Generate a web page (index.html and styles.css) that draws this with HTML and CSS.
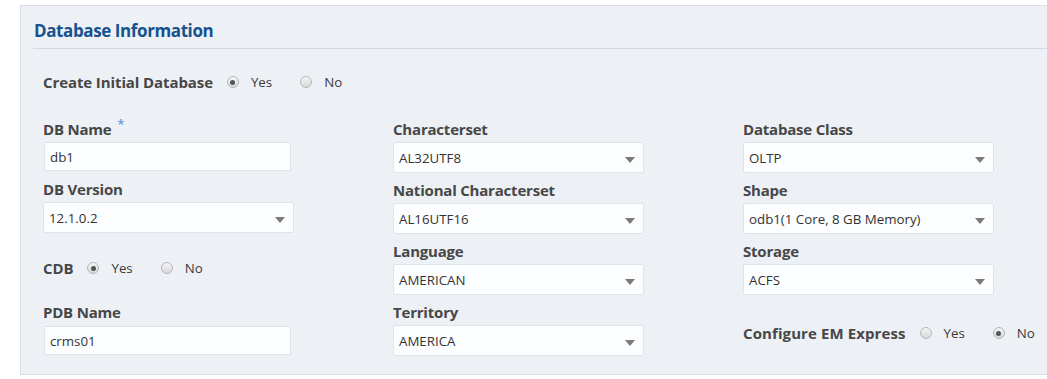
FILE: index.html
```html
<!DOCTYPE html>
<html>
<head>
<meta charset="utf-8">
<link rel="stylesheet" href="styles.css">
</head>
<body>
<div class="panel">
  <div class="panel-head">
    <h2 class="title">Database Information</h2>
  </div>
  <div class="panel-body">
    <div class="radio-row create-row">
      <span class="row-label">Create Initial Database</span>
      <span class="radio checked"></span><span class="radio-text">Yes</span>
      <span class="radio"></span><span class="radio-text">No</span>
    </div>
    <div class="grid">
      <div class="col">
        <div class="field">
          <div class="label">DB Name <span class="req">*</span></div>
          <div class="input">db1</div>
        </div>
        <div class="field">
          <div class="label">DB Version</div>
          <div class="select">12.1.0.2</div>
        </div>
        <div class="radio-row cdb-row">
          <span class="row-label">CDB</span>
          <span class="radio checked"></span><span class="radio-text">Yes</span>
          <span class="radio"></span><span class="radio-text">No</span>
        </div>
        <div class="field pdb-field">
          <div class="label">PDB Name</div>
          <div class="input">crms01</div>
        </div>
      </div>
      <div class="col">
        <div class="field">
          <div class="label">Characterset</div>
          <div class="select">AL32UTF8</div>
        </div>
        <div class="field">
          <div class="label">National Characterset</div>
          <div class="select">AL16UTF16</div>
        </div>
        <div class="field">
          <div class="label">Language</div>
          <div class="select">AMERICAN</div>
        </div>
        <div class="field">
          <div class="label">Territory</div>
          <div class="select">AMERICA</div>
        </div>
      </div>
      <div class="col">
        <div class="field">
          <div class="label">Database Class</div>
          <div class="select">OLTP</div>
        </div>
        <div class="field">
          <div class="label">Shape</div>
          <div class="select">odb1(1 Core, 8 GB Memory)</div>
        </div>
        <div class="field">
          <div class="label">Storage</div>
          <div class="select">ACFS</div>
        </div>
        <div class="radio-row em-row">
          <span class="row-label">Configure EM Express</span>
          <span class="radio"></span><span class="radio-text">Yes</span>
          <span class="radio checked"></span><span class="radio-text">No</span>
        </div>
      </div>
    </div>
  </div>
</div>
</body>
</html>
```

FILE: styles.css
```css
html, body {
  margin: 0;
  padding: 0;
  background: #ffffff;
}
body {
  font-family: "Open Sans", "Noto Sans", sans-serif;
  color: #333333;
  overflow: hidden;
}
.panel {
  margin: 5px 0 0 20px;
  height: 368px;
  background: #edf0f4;
  border: 1px solid #d9dee4;
  border-right: none;
}
.panel-head {
  margin-left: 12px;
  padding: 13px 0 5px 1px;
  border-bottom: 1px solid #d3d9e0;
}
.title {
  margin: 0;
  font-size: 17px;
  line-height: 24px;
  font-weight: 700;
  color: #15528f;
  letter-spacing: -0.4px;
}
.panel-body {
  padding-left: 22px;
}
.radio-row {
  display: flex;
  align-items: center;
  height: 24px;
  white-space: nowrap;
}
.row-label {
  font-size: 15px;
  font-weight: 700;
  color: #474747;
  margin-right: 14px;
  letter-spacing: -0.1px;
  flex: none;
}
.radio {
  box-sizing: border-box;
  width: 12px;
  height: 12px;
  border-radius: 50%;
  border: 1px solid #b4b8bd;
  background: linear-gradient(#f5f5f5, #d8d8d8);
  display: flex;
  align-items: center;
  justify-content: center;
  flex: none;
}
.radio.checked::after {
  content: "";
  width: 5px;
  height: 5px;
  border-radius: 50%;
  background: #555555;
}
.radio-text {
  font-size: 13.3px;
  color: #3a3a3a;
  margin-left: 12px;
  margin-right: 28px;
  flex: none;
}
.radio-text:last-child {
  margin-right: 0;
}
.create-row {
  margin-top: 21px;
}
.grid {
  display: grid;
  grid-template-columns: 350px 350px 1fr;
  margin-top: 25px;
}
.col {
  display: flex;
  flex-direction: column;
  min-width: 0;
}
.field {
  margin-bottom: 7px;
}
.label {
  font-size: 15px;
  line-height: 20px;
  font-weight: 700;
  color: #474747;
  margin-bottom: 3px;
  letter-spacing: -0.2px;
}
.req {
  color: #4a8ee0;
  font-weight: 400;
  font-size: 13px;
  line-height: 0;
  vertical-align: 6px;
  margin-left: 2px;
}
.input, .select {
  box-sizing: border-box;
  background: #fcfdfe;
  border: 1px solid #e0e4e9;
  font-size: 13.3px;
  color: #333333;
  display: flex;
  align-items: center;
  padding-left: 5px;
}
.input {
  width: 247px;
  height: 29px;
  margin: 1px 0 1px 1px;
}
.select {
  position: relative;
  width: 251px;
  height: 31px;
  border-radius: 2px;
}
.select::after {
  content: "";
  position: absolute;
  right: 8px;
  top: 14px;
  border-left: 5px solid transparent;
  border-right: 5px solid transparent;
  border-top: 6px solid #7a7a7a;
}
.cdb-row {
  margin-top: 16px;
}
.pdb-field {
  margin-top: 22px;
}
.pdb-field .label {
  margin-bottom: 4px;
}
.em-row {
  margin-top: 19px;
}
.em-row .row-label {
  letter-spacing: 0.1px;
}
```
